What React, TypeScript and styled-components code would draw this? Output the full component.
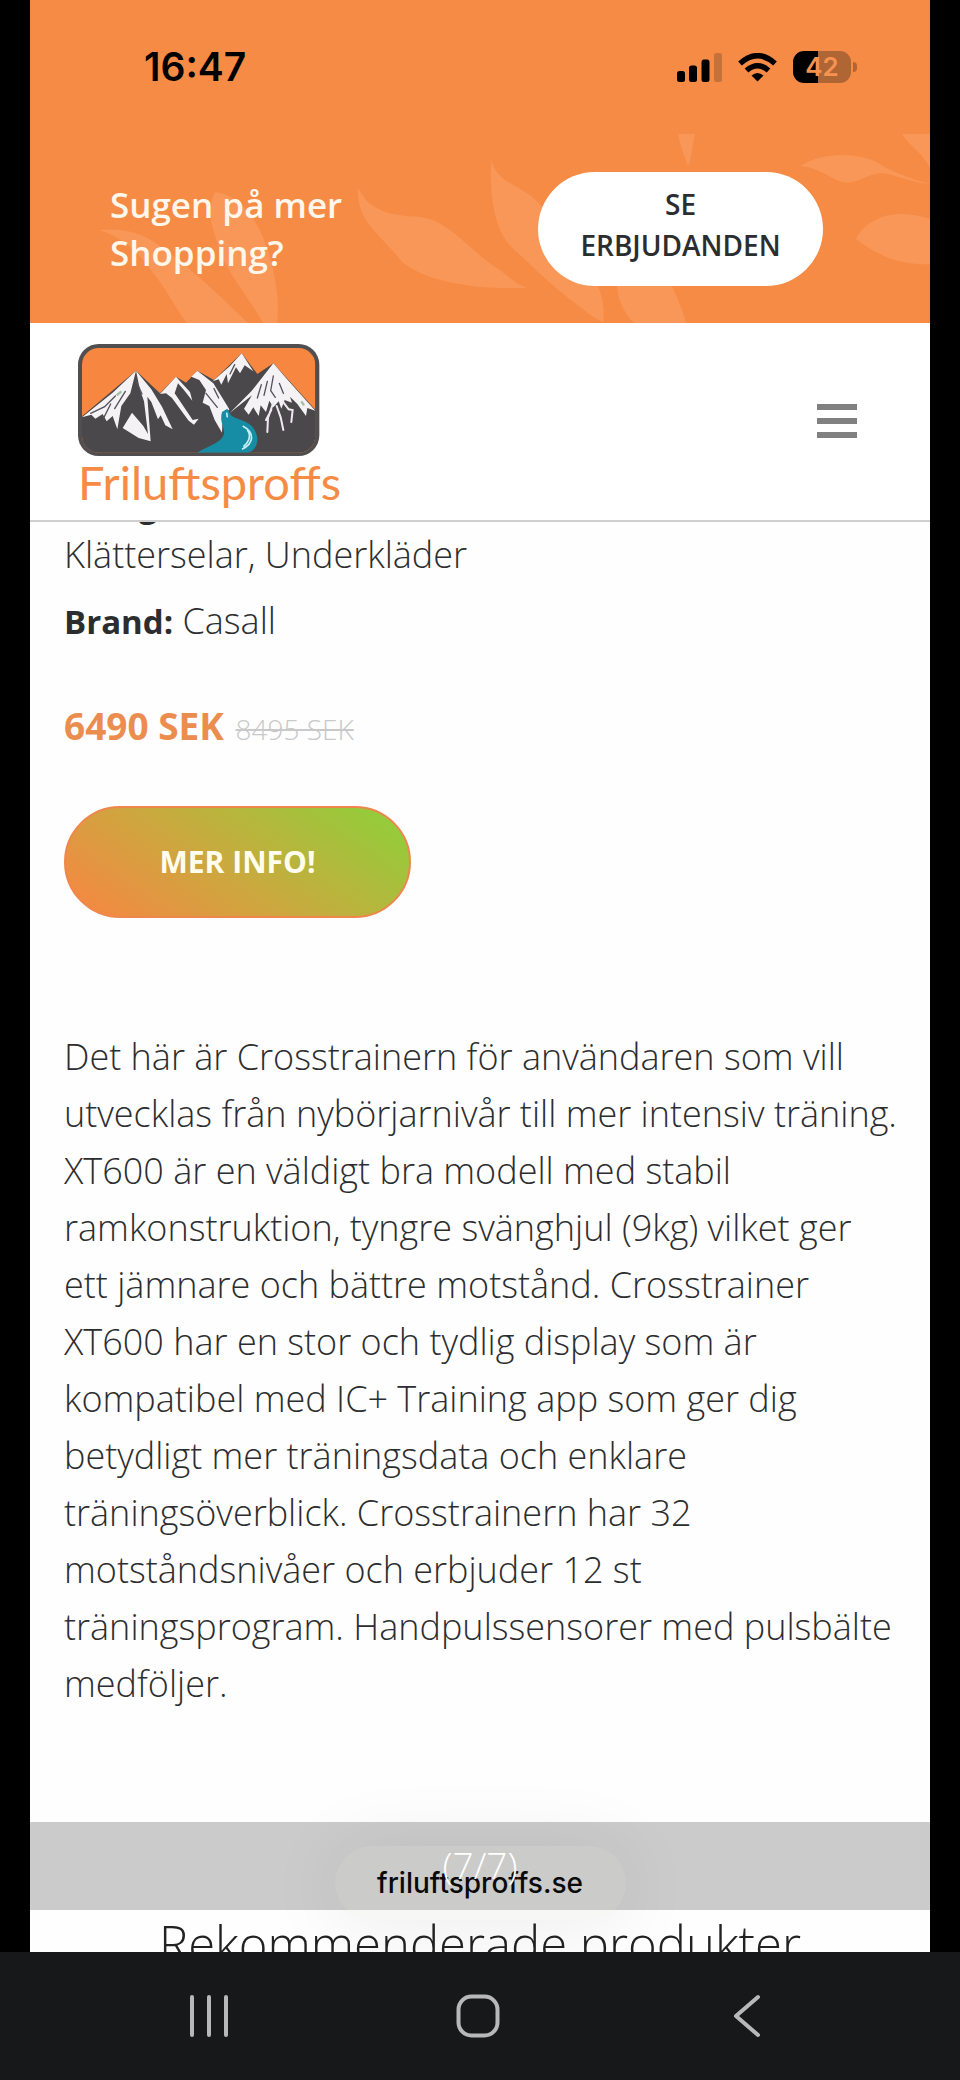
import React from 'react';
import styled, { createGlobalStyle } from 'styled-components';

const orange = '#f68b46';
const ink = '#2c2d2f';

const GlobalStyle = createGlobalStyle`
  *, *::before, *::after { box-sizing: border-box; }
  body {
    margin: 0;
    background: #000;
    color: ${ink};
    font-family: "Open Sans", "Noto Sans", sans-serif;
    font-weight: 300;
  }
  h2, p { margin: 0; font-weight: inherit; }
  button { font-family: inherit; cursor: pointer; }
`;

const Device = styled.div`
  display: flex;
  flex-direction: column;
  height: 100vh;
`;

const Screen = styled.div`
  position: relative;
  flex: 1;
  min-height: 0;
  margin: 0 30px;
  overflow: hidden;
  background: #fefefe;
`;

const StatusBar = styled.div`
  display: flex;
  align-items: center;
  justify-content: space-between;
  height: 134px;
  padding: 0 73px 0 114px;
  background: ${orange};
  color: #000;
  font-family: Inter, sans-serif;
`;

const Clock = styled.time`
  font-size: 39px;
  font-weight: 600;
  line-height: 46px;
`;

const StatusIcons = styled.div`
  display: flex;
  align-items: center;
  gap: 16px;

  svg { display: block; }
`;

const Battery = styled.div`
  display: flex;
  align-items: center;
  gap: 2px;
`;

const BatteryBody = styled.span`
  width: 58px;
  border-radius: 11px;
  background: linear-gradient(90deg, #000 25px, #b06534 25px);
  color: #f79350;
  font-size: 26px;
  font-weight: 600;
  line-height: 32px;
  text-align: center;
`;

const BatteryTip = styled.span`
  width: 4px;
  height: 10px;
  border-radius: 0 4px 4px 0;
  background: #b06534;
`;

const Promo = styled.section`
  position: relative;
  display: flex;
  align-items: center;
  justify-content: space-between;
  height: 189px;
  padding: 0 107px 0 80px;
  background: ${orange};
`;

const Leaves = styled.svg`
  position: absolute;
  inset: 0;
  width: 100%;
  height: 100%;
  fill: #f89757;
`;

const PromoText = styled.p`
  position: relative;
  max-width: 260px;
  color: #fff7ec;
  font-size: 35px;
  font-weight: 600;
  line-height: 48px;
`;

const PromoButton = styled.button`
  position: relative;
  width: 285px;
  padding: 12px 40px 20px;
  border: 0;
  border-radius: 57px;
  background: #fff;
  color: ${ink};
  font-size: 28px;
  font-weight: 600;
  line-height: 41px;
`;

const SiteHeader = styled.header`
  position: relative;
  z-index: 1;
  display: flex;
  align-items: center;
  justify-content: space-between;
  padding: 21px 73px 13px 48px;
  border-bottom: 2px solid #cfcfcf;
  background: #fff;
`;

const Brand = styled.a`
  color: ${orange};
  font-family: Lato, sans-serif;
  font-size: 47px;
  font-weight: 400;
  line-height: 50px;
  text-decoration: none;

  svg { display: block; }
`;

const MenuButton = styled.button`
  display: grid;
  gap: 8px;
  width: 40px;
  margin-bottom: 10px;
  padding: 0;
  border: 0;
  background: none;
`;

const MenuBar = styled.span`
  height: 6px;
  background: #808080;
`;

const Product = styled.article`
  padding: 0 32px 0 34px;
`;

const Meta = styled.p`
  margin-bottom: 16px;
  font-size: 36px;
  line-height: 50px;
`;

const MetaList = styled.div`
  margin-top: -43px;
`;

const Label = styled.strong`
  font-size: 33px;
  font-weight: 700;
`;

const Prices = styled.p`
  margin: 54px 0 52px;
  font-size: 37px;
  line-height: 50px;
`;

const Price = styled.strong`
  color: #ec8d50;
  font-weight: 700;
`;

const OldPrice = styled.del`
  margin-left: 2px;
  color: #c9c9c9;
  font-size: 28px;
`;

const InfoButton = styled.button`
  display: block;
  width: 347px;
  padding: 30px;
  border: 2px solid #ef874c;
  border-radius: 56px;
  background: linear-gradient(35deg, #f08c42 10%, #c6ac3e 50%, #94cc3a 92%) border-box;
  color: #fffdee;
  font-size: 30px;
  font-weight: 700;
  line-height: 48px;
`;

const Description = styled.p`
  margin: 110px 0;
  font-size: 36px;
  line-height: 57px;
`;

const CounterBand = styled.div`
  padding: 18px 0 20px;
  background: #cbcbcb;
  font-size: 37px;
  line-height: 50px;
  text-align: center;
`;

const Counter = styled.span`
  position: relative;
  z-index: 2;
  color: #fff;
`;

const SectionTitle = styled.h2`
  color: #222;
  font-size: 49px;
  line-height: 66px;
  text-align: center;
`;

const AddressRow = styled.div`
  position: absolute;
  right: 0;
  bottom: 32px;
  left: 0;
  display: flex;
  justify-content: center;
`;

const AddressPill = styled.a`
  width: 291px;
  border-radius: 37px;
  background: rgba(203, 203, 190, 0.14);
  box-shadow: 0 4px 80px rgba(0, 0, 0, 0.08);
  color: #0a0a0a;
  font-family: Inter, sans-serif;
  font-size: 28px;
  font-weight: 500;
  line-height: 74px;
  text-align: center;
  text-decoration: none;
`;

const NavBar = styled.nav`
  display: flex;
  height: 128px;
  padding: 0 79px 0 74px;
  background: #17181a;
`;

const NavButton = styled.button`
  display: flex;
  flex: 1;
  align-items: center;
  justify-content: center;
  border: 0;
  background: none;

  svg {
    fill: none;
    stroke: #b8b8ba;
    stroke-width: 4;
    stroke-linecap: round;
    stroke-linejoin: round;
  }
`;

const LeafPattern = () => (
  <Leaves viewBox="30 134 900 189" preserveAspectRatio="xMidYMid slice" aria-hidden="true">
    <path d="M99 230C135 227 152 239 173 256C200 276 228 304 248 323H187C175 308 166 288 153 273C139 253 125 238 99 230Z" />
    <path d="M215 192C239 195 258 218 268 251C276 278 280 303 277 323H263C246 292 223 270 216 238C208 218 209 204 215 192Z" />
    <path d="M358 188C371 212 389 215 420 217C450 220 472 254 500 270C509 278 518 285 527 288C482 289 431 285 402 262C382 235 356 222 358 188Z" />
    <path d="M491 160C499 187 524 183 545 210C577 245 609 285 603 323C570 302 543 277 517 252C493 234 490 195 491 160Z" />
    <path d="M617 286H672C678 300 683 311 686 323H634C624 313 618 301 617 286Z" />
    <path d="M678 134H695C692 146 692 157 688 166C684 155 680 145 678 134Z" />
    <path d="M800 166C824 151 865 151 886 168C901 175 915 180 930 184C911 183 895 174 881 173C866 174 854 186 842 182C830 178 817 167 800 166Z" />
    <path d="M902 134H930V168C923 153 909 146 902 134Z" />
    <path d="M856 239C868 216 897 208 930 219V264C900 266 875 254 856 239Z" />
  </Leaves>
);

const SignalIcon = () => (
  <svg width="45" height="29" viewBox="0 0 45 29" role="img" aria-label="Signal">
    <rect y="18" width="8" height="11" rx="2.5" />
    <rect x="12" y="12.5" width="8" height="16.5" rx="2.5" />
    <rect x="24.5" y="6.5" width="8" height="22.5" rx="2.5" />
    <rect x="37" width="8" height="29" rx="2.5" fill="#c4713b" />
  </svg>
);

const WifiIcon = () => (
  <svg width="39" height="29" viewBox="0 0 39 29" role="img" aria-label="Wi-Fi">
    <g fill="none" stroke="#000" strokeWidth="5.5">
      <path d="M2 10.5Q19.5 -5 37 10.5" />
      <path d="M8.5 17.5Q19.5 8 30.5 17.5" />
    </g>
    <path d="M13.5 22.5Q19.5 17.5 25.5 22.5L19.5 28.5Z" />
  </svg>
);

const MountainLogo = () => (
  <svg width="242" height="113" viewBox="54 42 726 339" aria-hidden="true">
    <defs>
      <clipPath id="logo-frame">
        <rect x="66" y="54" width="700" height="314" rx="50" />
      </clipPath>
    </defs>
    <rect x="54" y="42" width="724" height="336" rx="62" fill="#504e4f" />
    <g clipPath="url(#logo-frame)">
      <rect x="66" y="54" width="700" height="320" fill="#f68640" />
      <path d="M60 264L228 122L300 190L348 140L378 158L412 122L462 150L545 70L592 132L640 100L772 246V380H60Z" fill="#4a484a" />
      <g fill="#f4f2f5">
        <path d="M66 262L158 188L228 122L211 190L184 228L172 298L158 258L140 274L128 252L106 266L94 254Z" />
        <path d="M228 122L274 178L306 230L338 298L316 286L302 256L294 268L274 216L262 200L272 334L236 324L188 294L216 248L250 288L264 312L252 214L240 180Z" />
        <path d="M300 192L348 140L390 186L397 212L370 178L354 160L344 190L382 246L398 270L416 266L402 284L386 272L336 204L318 190Z" />
        <path d="M394 140L412 122L460 160L508 238L488 260L486 308L464 270L448 228L428 218L438 180L418 150Z" />
        <path d="M458 154L510 108L545 70L580 124L554 106L540 130L528 112L504 160L500 132L484 164L476 148Z" />
        <path d="M510 248L574 184L640 100L680 146L766 242L742 234L738 258L712 222L690 200L696 218L674 210L664 236L656 214L640 232L628 212L618 246L602 226L596 258L580 232L566 254L552 236L576 196Z" />
      </g>
      <g fill="none" stroke="#eeeaf0" strokeWidth="6" strokeLinecap="round">
        <path d="M640 218L624 264L622 306M650 228L662 262L670 300M668 214L686 238L698 240L694 276M634 240L618 270" />
      </g>
      <g fill="none" stroke="#55525a" strokeWidth="4" strokeLinecap="round">
        <path d="M92 250L134 230L166 198M130 266L152 222M164 236L196 184M438 190L472 232M462 176L476 204M524 104L510 132M604 164L592 204M622 154L612 196M640 138L632 182L646 202M658 160L670 190M228 152L246 192" />
      </g>
      <path d="M170 196L184 184M724 214L732 226" stroke="#9fc2a0" strokeWidth="7" />
      <path d="M486 246L502 236L512 254C526 270 568 268 584 300C602 334 588 360 564 368H412C440 348 490 338 492 308C492 286 478 276 486 246Z" fill="#168da5" />
      <path d="M548 288C586 308 582 340 546 358M562 300C578 322 560 342 550 350M500 248L502 262" fill="none" stroke="#c7edf6" strokeWidth="5" />
    </g>
  </svg>
);

export default function App() {
  return (
    <Device>
      <GlobalStyle />
      <Screen>
        <StatusBar>
          <Clock>16:47</Clock>
          <StatusIcons>
            <SignalIcon />
            <WifiIcon />
            <Battery>
              <BatteryBody>42</BatteryBody>
              <BatteryTip />
            </Battery>
          </StatusIcons>
        </StatusBar>

        <Promo>
          <LeafPattern />
          <PromoText>Sugen på mer Shopping?</PromoText>
          <PromoButton type="button">SE ERBJUDANDEN</PromoButton>
        </Promo>

        <SiteHeader>
          <Brand href="#">
            <MountainLogo />
            Friluftsproffs
          </Brand>
          <MenuButton type="button" aria-label="Meny">
            <MenuBar />
            <MenuBar />
            <MenuBar />
          </MenuButton>
        </SiteHeader>

        <main>
          <Product>
            <MetaList>
              <Meta>
                <Label>Categories:</Label> Accessoarer, Friluftskläder dam, Klätterselar, Underkläder
              </Meta>
              <Meta>
                <Label>Brand:</Label> Casall
              </Meta>
            </MetaList>
            <Prices>
              <Price>6490 SEK</Price> <OldPrice>8495 SEK</OldPrice>
            </Prices>
            <InfoButton type="button">MER INFO!</InfoButton>
            <Description>
              Det här är Crosstrainern för användaren som vill utvecklas från nybörjarnivår till mer
              intensiv träning. XT600 är en väldigt bra modell med stabil ramkonstruktion, tyngre
              svänghjul (9kg) vilket ger ett jämnare och bättre motstånd. Crosstrainer XT600 har en
              stor och tydlig display som är kompatibel med IC+ Training app som ger dig betydligt
              mer träningsdata och enklare träningsöverblick. Crosstrainern har 32 motståndsnivåer
              och erbjuder 12 st träningsprogram. Handpulssensorer med pulsbälte medföljer.
            </Description>
          </Product>
          <CounterBand>
            <Counter>(7/7)</Counter>
          </CounterBand>
          <SectionTitle>Rekommenderade produkter</SectionTitle>
        </main>

        <AddressRow>
          <AddressPill href="#">friluftsproffs.se</AddressPill>
        </AddressRow>
      </Screen>

      <NavBar>
        <NavButton type="button" aria-label="Senaste appar">
          <svg width="40" height="44" viewBox="0 0 40 44">
            <path d="M3 3V41M20 3V41M37 3V41" />
          </svg>
        </NavButton>
        <NavButton type="button" aria-label="Hem">
          <svg width="44" height="44" viewBox="0 0 44 44">
            <rect x="2.5" y="2.5" width="39" height="39" rx="13" />
          </svg>
        </NavButton>
        <NavButton type="button" aria-label="Tillbaka">
          <svg width="28" height="44" viewBox="0 0 28 44">
            <path d="M25 3L3 22L25 41" />
          </svg>
        </NavButton>
      </NavBar>
    </Device>
  );
}
